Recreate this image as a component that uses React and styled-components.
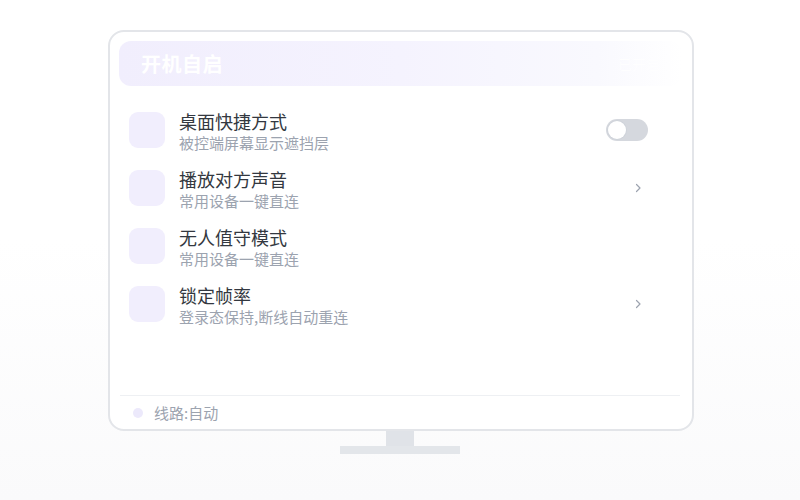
import React from 'react'
import styled, { createGlobalStyle } from 'styled-components'

const GlobalStyle = createGlobalStyle`
    html, body {
        margin: 0;
        padding: 0;
    }
    body {
        font-family: "Noto Sans CJK SC", "Noto Sans", sans-serif;
    }
`

const settings = [
    { title: '桌面快捷方式', desc: '被控端屏幕显示遮挡层', action: 'toggle' },
    { title: '播放对方声音', desc: '常用设备一键直连', action: 'chevron' },
    { title: '无人值守模式', desc: '常用设备一键直连', action: null },
    { title: '锁定帧率', desc: '登录态保持,断线自动重连', action: 'chevron' },
]

const Chevron = () => (
    <svg width="8" height="12" viewBox="0 0 8 12" fill="none">
        <path d="M2.5 2.5l3.5 3.5-3.5 3.5" stroke="#9ca3af" strokeWidth="1.2" strokeLinecap="round" strokeLinejoin="round" />
    </svg>
)

const App = () => {
    return (
        <Page>
            <GlobalStyle />
            <Monitor>
                <Header>
                    <HeaderTitle>开机自启</HeaderTitle>
                    <HeaderHint>已开启</HeaderHint>
                </Header>
                <List>
                    {settings.map((item) => (
                        <Row key={item.title}>
                            <IconBox />
                            <Texts>
                                <Title>{item.title}</Title>
                                <Desc>{item.desc}</Desc>
                            </Texts>
                            <Trailing>
                                {item.action === 'toggle' && (
                                    <Switch>
                                        <Knob />
                                    </Switch>
                                )}
                                {item.action === 'chevron' && (
                                    <ChevronBox>
                                        <Chevron />
                                    </ChevronBox>
                                )}
                            </Trailing>
                        </Row>
                    ))}
                </List>
                <Footer>
                    <Dot />
                    <FooterText>线路:自动</FooterText>
                </Footer>
            </Monitor>
            <Neck />
            <Base />
        </Page>
    )
}

export default App

const Page = styled.div`
    width: 800px;
    height: 500px;
    box-sizing: border-box;
    padding-top: 30px;
    display: flex;
    flex-direction: column;
    align-items: center;
    background: linear-gradient(180deg, #ffffff 0%, #ffffff 48%, #fafafb 100%);
    overflow: hidden;
`

const Monitor = styled.div`
    width: 586px;
    height: 401px;
    box-sizing: border-box;
    margin-left: 2px;
    border: 2px solid #e3e5e9;
    border-radius: 16px;
    background: #ffffff;
    padding: 9px 10px 0 9px;
    display: flex;
    flex-direction: column;
`

const Header = styled.div`
    height: 45px;
    border-radius: 12px;
    background: linear-gradient(90deg, #f1eefd 0%, #f5f3fe 50%, #f9f9fe 85%, rgba(255, 255, 255, 0) 100%);
    display: flex;
    align-items: center;
    justify-content: space-between;
    padding: 0 22px;
`

const HeaderTitle = styled.div`
    color: #ffffff;
    font-size: 20px;
    font-weight: 700;
    letter-spacing: 0.5px;
`

const HeaderHint = styled.div`
    color: #ffffff;
    font-size: 14px;
    opacity: 0.8;
`

const List = styled.div`
    margin-top: 26px;
    padding: 0 34px 0 10px;
    display: flex;
    flex-direction: column;
    gap: 16px;
    flex: 1;
`

const Row = styled.div`
    display: flex;
    align-items: flex-start;
    min-height: 42px;
`

const IconBox = styled.div`
    width: 36px;
    height: 36px;
    border-radius: 9px;
    background: #f1eefd;
    flex-shrink: 0;
`

const Texts = styled.div`
    margin-left: 14px;
    margin-top: -2px;
    display: flex;
    flex-direction: column;
    flex: 1;
`

const Title = styled.div`
    font-size: 18px;
    line-height: 23px;
    color: #333840;
`

const Desc = styled.div`
    font-size: 15px;
    line-height: 20px;
    color: #9ca3af;
`

const Trailing = styled.div`
    height: 36px;
    display: flex;
    align-items: center;
    justify-content: flex-end;
`

const Switch = styled.div`
    width: 42px;
    height: 22px;
    border-radius: 11px;
    background: #d5d8de;
    display: flex;
    align-items: center;
    padding: 0 2px;
    box-sizing: border-box;
`

const Knob = styled.div`
    width: 18px;
    height: 18px;
    border-radius: 50%;
    background: #ffffff;
    box-shadow: 0 0 0 1px #cfd3da;
`

const ChevronBox = styled.div`
    width: 20px;
    height: 20px;
    display: flex;
    align-items: center;
    justify-content: center;
`

const Footer = styled.div`
    height: 33px;
    margin: 0 2px 0 1px;
    border-top: 1px solid #eef0f3;
    display: flex;
    align-items: center;
    padding-left: 13px;
`

const Dot = styled.div`
    width: 10px;
    height: 10px;
    border-radius: 50%;
    background: #ece9fb;
`

const FooterText = styled.div`
    margin-left: 11px;
    font-size: 15px;
    color: #9ca3af;
`

const Neck = styled.div`
    width: 28px;
    height: 15px;
    background: #e0e3e8;
`

const Base = styled.div`
    width: 120px;
    height: 8px;
    background: #e3e6ea;
`
